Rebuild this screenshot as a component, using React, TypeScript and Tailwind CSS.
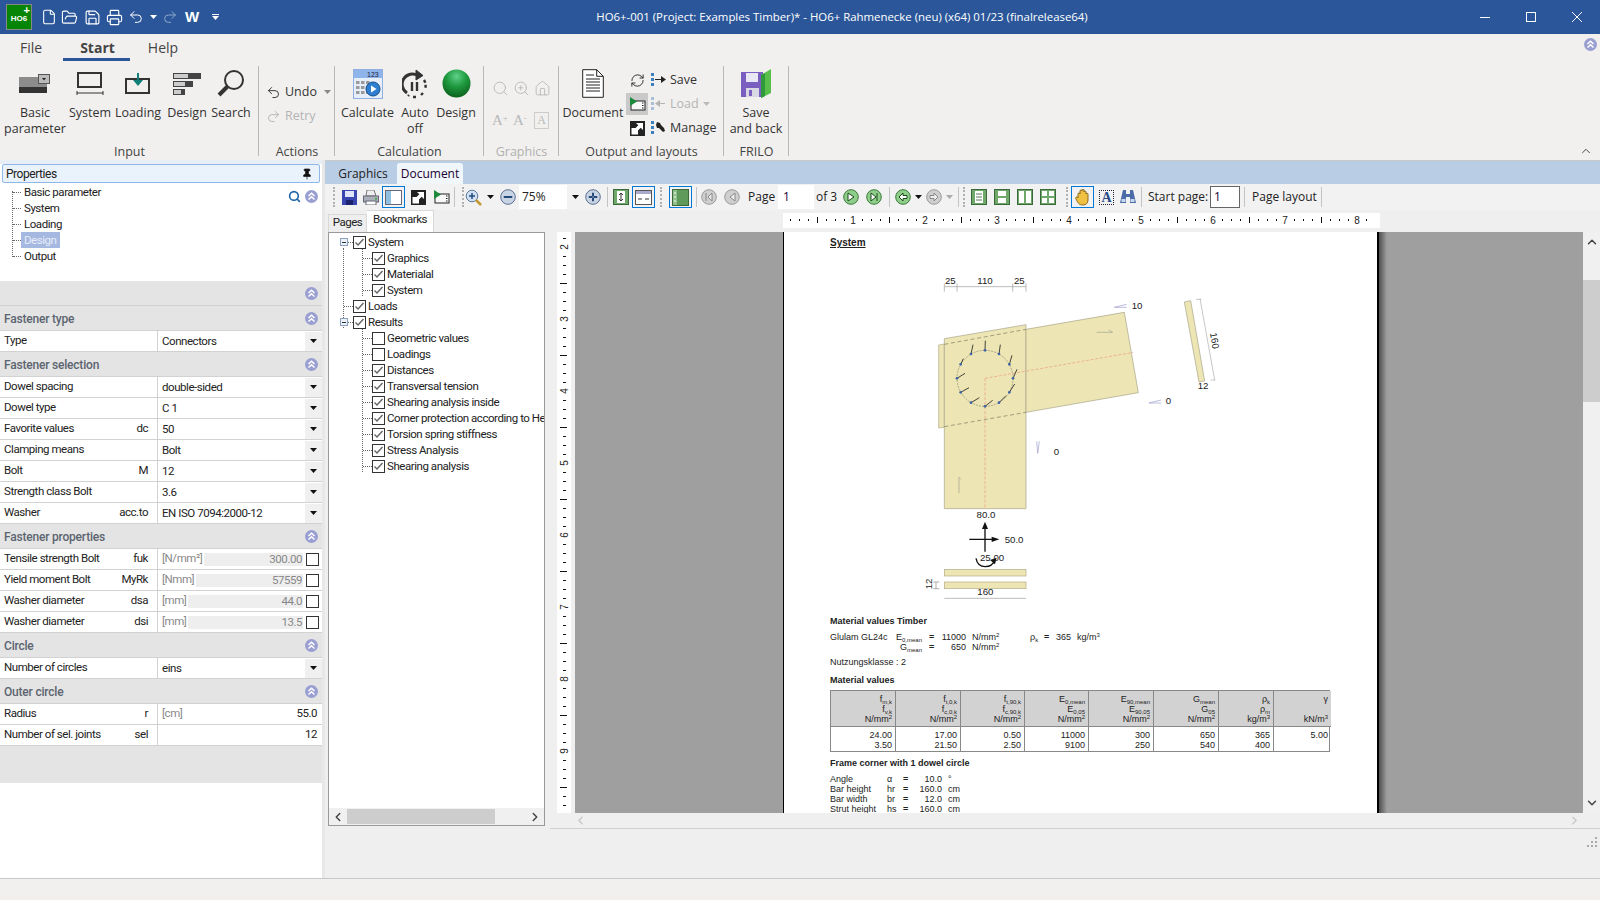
import { File, FolderOpen, Save, Printer, Undo2, Redo2, RefreshCw, Search, ZoomIn, Home, Pin, ChevronLeft, ChevronRight, ChevronUp, ChevronDown } from 'lucide-react'
import type { ReactNode } from 'react'

const Collapse = () => (
  <svg width="13" height="13" viewBox="0 0 13 13">
    <circle cx="6.5" cy="6.5" r="6.5" fill="#9a9fd2" />
    <path d="M3.5 6 6.5 3.2 9.5 6M3.5 9.5 6.5 6.7 9.5 9.5" fill="none" stroke="#fff" strokeWidth="1.5" />
  </svg>
)

const Caret = ({ color = '#111' }: { color?: string }) => (
  <svg width="7" height="4" viewBox="0 0 7 4"><path d="M0 0h7L3.5 4z" fill={color} /></svg>
)

const BasicIcon = () => (
  <svg width="32" height="20" viewBox="0 0 32 20">
    <rect x="0" y="3" width="28" height="10" fill="#8c8c8c" />
    <rect x="0" y="13" width="28" height="6" fill="#333" />
    <rect x="19.5" y="0.5" width="11" height="9" fill="#bbb" stroke="#555" />
    <path d="M23 4h4l-2 2.5z" fill="#222" />
  </svg>
)
const SystemIcon = () => (
  <svg width="28" height="24" viewBox="0 0 28 24" fill="none" stroke="#333">
    <rect x="2" y="1" width="23" height="14" strokeWidth="2" />
    <path d="M1 21h26M1 19v4M27 19v4" />
  </svg>
)
const LoadingIcon = () => (
  <svg width="26" height="22" viewBox="0 0 26 22">
    <rect x="1" y="6" width="23" height="14" fill="none" stroke="#333" strokeWidth="2" />
    <path d="M12 0h2v7h4l-5 6-5-6h4z" fill="#0f8078" />
  </svg>
)
const DesignIcon = () => (
  <svg width="30" height="24" viewBox="0 0 30 24">
    <rect x="1" y="1" width="28" height="6" fill="#444" /><rect x="2" y="2" width="14" height="4" fill="#ccc" />
    <rect x="1" y="9" width="20" height="6" fill="#444" /><rect x="2" y="10" width="11" height="4" fill="#ccc" />
    <rect x="1" y="17" width="12" height="6" fill="#444" /><rect x="2" y="18" width="7" height="4" fill="#ccc" />
  </svg>
)
const SearchBig = () => (
  <svg width="28" height="27" viewBox="0 0 28 27" fill="none" stroke="#333">
    <circle cx="17" cy="10" r="9" strokeWidth="2" />
    <path d="M10.5 16.5 2 25" strokeWidth="4" />
  </svg>
)
const CalcIcon = () => (
  <svg width="30" height="30" viewBox="0 0 30 30">
    <rect x="0.5" y="0.5" width="29" height="29" fill="#e6eefa" stroke="#8fb0e0" />
    <rect x="1" y="1" width="28" height="8" fill="#8fb4ea" />
    <text x="14" y="8" fontSize="7" fontFamily="Liberation Sans" fill="#224">123</text>
    {[12, 17, 22].map(y => [3, 8, 13].map(x => <rect key={`${x}-${y}`} x={x} y={y} width="3.5" height="3" fill="#9a9a9a" />))}
    <circle cx="20" cy="20" r="7" fill="#2f7fd0" stroke="#154d8a" />
    <path d="M18 16.5v7l5.5-3.5z" fill="#fff" />
  </svg>
)
const AutoOff = () => (
  <svg width="26" height="30" viewBox="0 0 26 30" fill="none" stroke="#333">
    <path d="M5 24A10 10 0 0 1 16 6.5" strokeWidth="3" />
    <path d="M14 1l7 5.5-7 4.5z" fill="#333" />
    <path d="M10 13v9M15 13v9" strokeWidth="2.4" />
    <path d="M22 11a10 10 0 0 1 1 9M21 24l-2 2M14 28h-3M7 26l-1 1" strokeWidth="2.4" strokeDasharray="3 2" />
  </svg>
)
const GreenBall = () => (
  <svg width="29" height="29" viewBox="0 0 29 29">
    <defs>
      <radialGradient id="ball" cx="50%" cy="25%" r="80%">
        <stop offset="0%" stopColor="#5fd08a" /><stop offset="45%" stopColor="#1f9a3f" /><stop offset="100%" stopColor="#0b5a1a" />
      </radialGradient>
    </defs>
    <circle cx="14.5" cy="14.5" r="14" fill="url(#ball)" />
  </svg>
)
const DocIcon = () => (
  <svg width="22" height="29" viewBox="0 0 22 29" fill="#fff" stroke="#222">
    <path d="M.7.7h14l6.6 6.6v21H.7z" /><path d="M14.7.7v6.6h6.6" fill="none" />
    <path d="M4 6h8M4 10h14M4 13h14M4 16h14M4 19h14M4 22h14" fill="none" />
  </svg>
)
const FilmPlay = ({ w = 17 }: { w?: number }) => (
  <svg width={w} height="14" viewBox="0 0 17 14">
    <rect x="2" y="4" width="14" height="9" fill="#f8f8f8" stroke="#222" />
    <path d="M1 0v9l7-4.5z" fill="#1c8a3a" />
    <path d="M13 6h1.5M13 8.5h1.5M13 11h1.5" stroke="#222" />
  </svg>
)
const PopOut = () => (
  <svg width="15" height="15" viewBox="0 0 15 15">
    <rect width="15" height="15" fill="#222" />
    <rect x="1.5" y="7" width="6.5" height="6.5" fill="#fff" />
    <path d="M6 2h7v7l-2.3-2.3-3 3-2.4-2.4 3-3z" fill="#fff" />
  </svg>
)
const ListArrow = ({ kind, color = '#222' }: { kind: 'save' | 'load' | 'manage'; color?: string }) => (
  <svg width="15" height="14" viewBox="0 0 15 14">
    <path d="M0 0h3v3H0zM0 5h3v3H0zM0 10h3v3H0z" fill={color === '#222' ? '#3a80c0' : '#a8c0d8'} />
    {kind === 'save' && <path d="M4 6h6V3l5 3.5L10 10V7H4z" fill={color} />}
    {kind === 'load' && <path d="M14 6H9V3L4 6.5 9 10V7h5z" fill={color} />}
    {kind === 'manage' && <path d="M6 1l3 1 1 2 3 3 1 3-2 1-4-4-2 0-1-3z" fill={color} />}
  </svg>
)
const FriloSave = () => (
  <svg width="30" height="30" viewBox="0 0 30 30">
    <path d="M0 3h22v25H0z" fill="#7a5fc0" />
    <rect x="5" y="4" width="12" height="9" fill="#e8e8f4" />
    <rect x="5" y="19" width="13" height="9" fill="#d8d8e4" /><rect x="8" y="21" width="3" height="6" fill="#7a5fc0" />
    <path d="M20 6 30 0v24l-10 5z" fill="#58c04a" />
    <path d="M20 6 24 4v23l-4 2z" fill="#2f9a3a" />
  </svg>
)

const RibbonBtn = ({ w, icon, label }: { w: string; icon: ReactNode; label: ReactNode }) => (
  <div className={`flex shrink-0 flex-col items-center ${w}`}>
    <div className="flex h-[43px] items-center justify-center">{icon}</div>
    <div className="text-center leading-[16px]">{label}</div>
  </div>
)

const Group = ({ w, label, dim, children }: { w: string; label: string; dim?: boolean; children: ReactNode }) => (
  <div className={`relative flex h-full shrink-0 flex-col ${w}`}>
    <div className="flex h-[84px] pt-[1px]">{children}</div>
    <div className={`text-center leading-[16px] ${dim ? 'text-[#b0b0b0]' : 'text-[#444]'}`}>{label}</div>
    <div className="absolute right-0 top-[5px] h-[90px] w-px bg-[#b8b8b8]" />
  </div>
)

const Ribbon = () => (
  <div className="flex h-[99px] shrink-0 bg-[#f1f0ef] text-[12.5px] text-[#333]">
    <Group w="w-[259px]" label="Input">
      <RibbonBtn w="w-[70px]" icon={<BasicIcon />} label={<>Basic<br />parameter</>} />
      <RibbonBtn w="w-[40px]" icon={<SystemIcon />} label="System" />
      <RibbonBtn w="w-[56px]" icon={<LoadingIcon />} label="Loading" />
      <RibbonBtn w="w-[42px]" icon={<DesignIcon />} label="Design" />
      <RibbonBtn w="w-[46px]" icon={<SearchBig />} label="Search" />
    </Group>
    <Group w="w-[76px]" label="Actions">
      <div className="flex flex-col gap-[8px] pl-[7px] pt-[22px]">
        <div className="flex h-[16px] items-center gap-[4px]"><Undo2 size={15} strokeWidth={1.5} /><span>Undo</span><span className="ml-[3px]"><Caret color="#888" /></span></div>
        <div className="flex h-[16px] items-center gap-[4px] text-[#b4b4b4]"><Redo2 size={15} strokeWidth={1.5} /><span>Retry</span></div>
      </div>
    </Group>
    <Group w="w-[149px]" label="Calculation">
      <RibbonBtn w="w-[65px]" icon={<CalcIcon />} label="Calculate" />
      <RibbonBtn w="w-[30px]" icon={<AutoOff />} label={<>Auto<br />off</>} />
      <RibbonBtn w="w-[52px]" icon={<GreenBall />} label="Design" />
    </Group>
    <Group w="w-[75px]" label="Graphics" dim>
      <div className="grid h-fit grid-cols-3 gap-y-[15px] pl-[6px] pt-[18px] text-[#b8b8b8]">
        <Search size={17} strokeWidth={1.3} className="mx-[2px]" />
        <ZoomIn size={17} strokeWidth={1.3} className="mx-[2px]" />
        <Home size={17} strokeWidth={1.3} className="mx-[2px]" />
        <span className="mx-[2px] [font-family:'Liberation_Serif',serif] text-[15px] leading-[17px]">A<sup className="text-[9px]">+</sup></span>
        <span className="mx-[2px] [font-family:'Liberation_Serif',serif] text-[15px] leading-[17px]">A<sup className="text-[9px]">-</sup></span>
        <span className="mx-[2px] w-[15px] border border-[#ccc] text-center [font-family:'Liberation_Serif',serif] text-[12px] leading-[15px]">A</span>
      </div>
    </Group>
    <Group w="w-[165px]" label="Output and layouts">
      <div className="ml-[1px]"><RibbonBtn w="w-[66px]" icon={<DocIcon />} label="Document" /></div>
      <div className="flex flex-col pt-[6px]">
        <div className="flex h-[24px] items-center"><span className="flex w-[22px] justify-center"><RefreshCw size={15} strokeWidth={1.6} /></span><span className="ml-[3px] mr-[4px]"><ListArrow kind="save" /></span>Save</div>
        <div className="flex h-[24px] items-center text-[#b4b4b4]"><span className="flex h-[22px] w-[22px] items-center justify-center bg-[#c9c9c9]"><FilmPlay /></span><span className="ml-[3px] mr-[4px]"><ListArrow kind="load" color="#b4b4b4" /></span>Load<span className="ml-[4px]"><Caret color="#bbb" /></span></div>
        <div className="flex h-[24px] items-center"><span className="flex w-[22px] justify-center"><PopOut /></span><span className="ml-[3px] mr-[4px]"><ListArrow kind="manage" /></span>Manage</div>
      </div>
    </Group>
    <Group w="w-[65px]" label="FRILO">
      <RibbonBtn w="w-[64px]" icon={<FriloSave />} label={<>Save<br />and back</>} />
    </Group>
    <div className="flex flex-1 items-end justify-end pb-[2px] pr-[7px]"><ChevronUp size={14} strokeWidth={1.5} /></div>
  </div>
)

const Head = ({ label }: { label: string }) => (
  <div className="flex h-[25px] items-center justify-between border-b border-[#d2d2d2] bg-[#e4e4e4] pl-[4px] pr-[4px] pt-[1px] text-[12px] font-medium tracking-[-0.2px] text-[#5c6470]">
    <span>{label}</span><Collapse />
  </div>
)

const Label = ({ label, sym }: { label: string; sym?: string }) => (
  <div className="flex w-[158px] shrink-0 items-center justify-between border-r border-[#d2d2d2] pl-[4px] pr-[9px]">
    <span>{label}</span><span>{sym}</span>
  </div>
)

const Row = ({ label, sym, value }: { label: string; sym?: string; value: string }) => (
  <div className="flex h-[21px] border-b border-[#d2d2d2] bg-white">
    <Label label={label} sym={sym} />
    <div className="flex flex-1 items-center justify-between pl-[4px]">
      <span className="pt-[2px]">{value}</span>
      <span className="flex h-[19px] w-[17px] items-center justify-center bg-[#f0f0f0]"><Caret /></span>
    </div>
  </div>
)

const RoRow = ({ label, sym, unit, value, field }: { label: string; sym: string; unit: string; value: string; field: string }) => (
  <div className="flex h-[21px] border-b border-[#d2d2d2] bg-white">
    <Label label={label} sym={sym} />
    <div className="flex min-w-0 flex-1 items-center pl-[4px] pr-[3px] text-[#888]">
      <span className="min-w-0 flex-1 whitespace-nowrap">{unit}</span>
      <span className={`h-[13px] shrink-0 bg-[#eeeeee] pr-[1px] text-right leading-[13px] ${field}`}>{value}</span>
      <span className="ml-[3px] h-[13px] w-[13px] shrink-0 border border-[#333] bg-white" />
    </div>
  </div>
)

const NumRow = ({ label, sym, unit, value }: { label: string; sym: string; unit?: string; value: string }) => (
  <div className="flex h-[21px] border-b border-[#d2d2d2] bg-white">
    <Label label={label} sym={sym} />
    <div className="flex flex-1 items-center justify-between pl-[4px] pr-[5px]">
      <span className="text-[#888]">{unit}</span><span>{value}</span>
    </div>
  </div>
)

const LeftPanel = () => (
  <div className="flex w-[322px] shrink-0 flex-col bg-white text-[11.5px] tracking-[-0.45px] text-[#222] [font-family:Roboto,sans-serif]">
    <div className="h-[4px] bg-[#e8eef6]" />
    <div className="mx-[2px] flex h-[19px] items-center justify-between rounded-[2px] border border-[#8fb8e8] bg-[#eaf3fc] pl-[3px] pr-[6px] text-[12px]">
      <span>Properties</span><Pin size={12} fill="#111" strokeWidth={1.5} />
    </div>
    <div className="relative h-[98px] pt-[1px]">
      <div className="absolute left-[12px] top-[8px] h-[66px] border-l border-dotted border-[#666]" />
      {['Basic parameter', 'System', 'Loading', 'Design', 'Output'].map((t, i) => (
        <div key={t} className="relative flex h-[16px] items-center pl-[21px] leading-[16px]">
          <div className="absolute left-[13px] top-[8px] w-[8px] border-t border-dotted border-[#666]" />
          <span className={`px-[3px] leading-[16px] ${i === 3 ? 'bg-[#a5b8e0] text-[#e8ecf8]' : ''}`}>{t}</span>
        </div>
      ))}
      <div className="absolute right-[4px] top-[7px] flex items-center gap-[4px]">
        <Search size={13} strokeWidth={3} color="#1e64a8" /><Collapse />
      </div>
    </div>
    <div className="flex h-[25px] items-center justify-end border-b border-[#d2d2d2] bg-[#e4e4e4] pr-[4px]"><Collapse /></div>
    <Head label="Fastener type" />
    <Row label="Type" value="Connectors" />
    <Head label="Fastener selection" />
    <Row label="Dowel spacing" value="double-sided" />
    <Row label="Dowel type" value="C 1" />
    <Row label="Favorite values" sym="dc" value="50" />
    <Row label="Clamping means" value="Bolt" />
    <Row label="Bolt" sym="M" value="12" />
    <Row label="Strength class Bolt" value="3.6" />
    <Row label="Washer" sym="acc.to" value="EN ISO 7094:2000-12" />
    <Head label="Fastener properties" />
    <RoRow label="Tensile strength Bolt" sym="fuk" unit="[N/mm²]" value="300.00" field="w-[99px]" />
    <RoRow label="Yield moment Bolt" sym="MyRk" unit="[Nmm]" value="57559" field="w-[107px]" />
    <RoRow label="Washer diameter" sym="dsa" unit="[mm]" value="44.0" field="w-[115px]" />
    <RoRow label="Washer diameter" sym="dsi" unit="[mm]" value="13.5" field="w-[115px]" />
    <Head label="Circle" />
    <Row label="Number of circles" value="eins" />
    <Head label="Outer circle" />
    <NumRow label="Radius" sym="r" unit="[cm]" value="55.0" />
    <NumRow label="Number of sel. joints" sym="sel" value="12" />
    <div className="h-[37px] bg-[#e4e4e4]" />
  </div>
)

const TreeCheck = ({ on = true }: { on?: boolean }) => (
  <svg width="13" height="13" viewBox="0 0 13 13" className="shrink-0">
    <rect x="0.5" y="0.5" width="12" height="12" fill="#fff" stroke="#333" />
    {on && <path d="M2.5 6.5 5 9l5.5-6" fill="none" stroke="#666" strokeWidth="1.4" />}
  </svg>
)

const bookmarks: [string, number, boolean, boolean?][] = [
  ['System', 0, true, true],
  ['Graphics', 1, true],
  ['Materialal', 1, true],
  ['System', 1, true],
  ['Loads', 0, true],
  ['Results', 0, true, true],
  ['Geometric values', 1, false],
  ['Loadings', 1, false],
  ['Distances', 1, true],
  ['Transversal tension', 1, true],
  ['Shearing analysis inside', 1, true],
  ['Corner protection according to He', 1, true],
  ['Torsion spring stiffness', 1, true],
  ['Stress Analysis', 1, true],
  ['Shearing analysis', 1, true],
]

const BookmarkPanel = () => (
  <div className="flex w-[225px] shrink-0 flex-col text-[11.5px] tracking-[-0.45px] text-[#222] [font-family:Roboto,sans-serif]">
    <div className="flex h-[22px] items-end pl-[3px]">
      <span className="flex h-[18px] w-[39px] items-center justify-center border-l border-r border-t border-[#d8d8d8] bg-[#eeeeee] pb-[1px]">Pages</span>
      <span className="flex h-[22px] w-[67px] items-center justify-center border-r border-t border-[#d8d8d8] bg-white pb-[3px]">Bookmarks</span>
    </div>
    <div className="ml-[3px] flex h-[594px] w-[217px] flex-col border border-[#9a9a9a] bg-white">
      <div className="relative flex-1 overflow-hidden pt-[1px]">
        <div className="absolute left-[14px] top-[15px] h-[80px] border-l border-dotted border-[#666]" />
        <div className="absolute left-[33px] top-[15px] h-[48px] border-l border-dotted border-[#666]" />
        <div className="absolute left-[33px] top-[95px] h-[144px] border-l border-dotted border-[#666]" />
        {bookmarks.map(([t, depth, on, exp], i) => (
          <div key={i} className="relative flex h-[16px] items-center whitespace-nowrap" style={{ paddingLeft: depth ? 43 : 24 }}>
            <div className="absolute top-[8px] w-[9px] border-t border-dotted border-[#666]" style={{ left: depth ? 34 : 15 }} />
            {exp && (
              <span className="absolute left-[11px] top-[4px] flex h-[8px] w-[8px] items-center justify-center border border-[#8aa0c0] bg-[#eef2f8]">
                <span className="h-px w-[4px] bg-[#234]" />
              </span>
            )}
            <span className="relative"><TreeCheck on={on} /></span>
            <span className="pl-[2px] leading-[16px]">{t}</span>
          </div>
        ))}
      </div>
      <div className="flex h-[17px] items-center bg-[#f0f0f0] text-[#444]">
        <ChevronLeft size={14} strokeWidth={2.5} className="ml-[2px]" />
        <div className="ml-[2px] h-[15px] w-[148px] bg-[#cdcdcd]" />
        <div className="flex-1" />
        <ChevronRight size={14} strokeWidth={2.5} className="mr-[2px]" />
      </div>
    </div>
  </div>
)

const Grip = () => <div className="mx-[3px] h-[20px] w-[2px] border-l-2 border-dotted border-[#b0b0b0]" />
const Sep = () => <div className="mx-[4px] h-[20px] w-px bg-[#c4c4c4]" />
const Sel = ({ children }: { children: ReactNode }) => (
  <span className="flex h-[22px] w-[23px] items-center justify-center border border-[#0078d7]">{children}</span>
)
const Tb = ({ w, children }: { w: string; children: ReactNode }) => (
  <span className={`flex h-[22px] shrink-0 items-center justify-center ${w}`}>{children}</span>
)

const Round = ({ dim, glyph, minus }: { dim?: boolean; glyph: string; minus?: boolean }) => (
  <svg width="16" height="16" viewBox="0 0 16 16">
    <circle cx="8" cy="8" r="7.3" fill={minus ? '#c8d4e4' : dim ? '#cfcfcf' : '#8fce8a'} stroke={minus ? '#5a7090' : dim ? '#9a9a9a' : '#3a7a3a'} />
    <path d={glyph} fill={dim ? '#eee' : '#fff'} stroke={minus ? '#244a7a' : dim ? '#888' : '#1a4a1a'} />
  </svg>
)

const View = ({ mode }: { mode: 0 | 1 | 2 | 3 }) => (
  <svg width="16" height="16" viewBox="0 0 16 16">
    <rect x="0.5" y="0.5" width="15" height="15" fill="#6fa86a" stroke="#3a6a3a" />
    {mode === 0 && <><rect x="4" y="2" width="8" height="12" fill="#fff" /><path d="M5 5h6M5 8h6M5 11h6" stroke="#5a7a5a" /></>}
    {mode === 1 && <><rect x="4" y="2" width="8" height="5" fill="#fff" /><rect x="4" y="9" width="8" height="5" fill="#fff" /></>}
    {mode === 2 && <><rect x="2" y="2" width="5" height="12" fill="#fff" /><rect x="9" y="2" width="5" height="12" fill="#fff" /></>}
    {mode === 3 && <><rect x="2" y="2" width="5" height="5" fill="#fff" /><rect x="9" y="2" width="5" height="5" fill="#fff" /><rect x="2" y="9" width="5" height="5" fill="#fff" /><rect x="9" y="9" width="5" height="5" fill="#fff" /></>}
  </svg>
)

const DocToolbar = () => (
  <div className="flex h-[26px] shrink-0 items-center bg-[#f2f2f2] pl-[5px] text-[12px] text-[#222]">
    <Grip />
    <Tb w="w-[22px]">
      <svg width="15" height="15" viewBox="0 0 15 15"><rect width="15" height="15" fill="#3a46b0" /><rect x="3" y="1" width="9" height="6" fill="#dfe4fa" /><rect x="4" y="10" width="7" height="5" fill="#1c2470" /></svg>
    </Tb>
    <Tb w="w-[22px]">
      <svg width="16" height="15" viewBox="0 0 16 15"><path d="M4 0h7l2 6H3z" fill="#eee" stroke="#777" /><rect x="0.5" y="6" width="15" height="6" fill="#aab0b8" stroke="#667" /><rect x="3" y="11" width="10" height="4" fill="#fff" stroke="#667" /><rect x="12" y="8" width="2" height="1.5" fill="#3a3" /></svg>
    </Tb>
    <Sel><svg width="17" height="15" viewBox="0 0 17 15"><rect x="0.5" y="0.5" width="16" height="14" fill="#fff" stroke="#667" /><rect x="1" y="1" width="5" height="13" fill="#8fc0e0" /></svg></Sel>
    <Tb w="w-[27px]"><PopOut /></Tb>
    <Tb w="w-[18px]"><FilmPlay /></Tb>
    <Sep />
    <Grip />
    <span className="-ml-[3px]"><Tb w="w-[19px]"><svg width="17" height="17" viewBox="0 0 17 17"><circle cx="7" cy="7" r="5.8" fill="#cfe0f4" stroke="#607898" /><path d="M4 7h6M7 4v6" stroke="#244a7a" strokeWidth="1.5" /><path d="M11 11l5 5" stroke="#c09a30" strokeWidth="2.5" /></svg></Tb></span>
    <Tb w="w-[14px]"><Caret /></Tb>
    <Tb w="w-[22px]"><Round minus glyph="M4 7.5h8v1H4z" /></Tb>
    <span className="flex h-[24px] w-[48px] items-center bg-white pl-[3px]">75%</span>
    <Tb w="w-[16px]"><Caret /></Tb>
    <Tb w="w-[20px]"><Round minus glyph="M4 7.5h3.5V4h1v3.5H12v1H8.5V12h-1V8.5H4z" /></Tb>
    <Sep />
    <Tb w="w-[18px]"><svg width="16" height="16" viewBox="0 0 16 16"><rect x="0.5" y="0.5" width="15" height="15" fill="#6fa86a" stroke="#3a6a3a" /><rect x="4" y="2" width="8" height="12" fill="#fff" /><path d="M8 4v8M6 6l2-2 2 2M6 10l2 2 2-2" fill="none" stroke="#333" /></svg></Tb>
    <span className="ml-[2px]"><Sel><svg width="17" height="15" viewBox="0 0 17 15"><rect x="0.5" y="0.5" width="16" height="14" fill="#fff" stroke="#555" /><rect x="1" y="1" width="15" height="3" fill="#aac" /><path d="M3 9h4M10 9h4" stroke="#333" /></svg></Sel></span>
    <span className="ml-[2px]"><Grip /></span>
    <span className="ml-[4px]"><Sel><svg width="17" height="17" viewBox="0 0 17 17"><rect x="0.5" y="0.5" width="16" height="16" fill="#8fc08a" stroke="#3a6a3a" /><rect x="5" y="1" width="11" height="15" fill="#5f9a5a" /><path d="M2 4h2M2 8h2M2 12h2" stroke="#fff" /></svg></Sel></span>
    <Sep />
    <span className="-ml-[1px]"><Tb w="w-[18px]"><Round dim glyph="M5 4v8M11 4v8L7 8z" /></Tb></span>
    <Tb w="w-[28px]"><Round dim glyph="M11 4v8L6 8z" /></Tb>
    <span className="ml-[2px] w-[30px]">Page</span>
    <span className="flex h-[24px] w-[36px] items-center bg-white pl-[5px] text-[#203]">1</span>
    <span className="ml-[2px] w-[23px]">of 3</span>
    <Tb w="w-[23px]"><Round glyph="M5 4v8l6-4z" /></Tb>
    <Tb w="w-[23px]"><Round glyph="M5 4v8l5-4zM11 4v8" /></Tb>
    <Sep />
    <Tb w="w-[18px]"><Round glyph="M12 6.5H8V4L4 8l4 4V9.5h4z" /></Tb>
    <Tb w="w-[12px]"><Caret /></Tb>
    <Tb w="w-[20px]"><Round dim glyph="M4 6.5h4V4l4 4-4 4V9.5H4z" /></Tb>
    <Tb w="w-[10px]"><Caret color="#aaa" /></Tb>
    <Sep />
    <span className="-ml-[3px]"><Grip /></span>
    <Tb w="w-[22px]"><View mode={0} /></Tb>
    <Tb w="w-[23px]"><View mode={1} /></Tb>
    <Tb w="w-[23px]"><View mode={2} /></Tb>
    <Tb w="w-[23px]"><View mode={3} /></Tb>
    <span className="ml-[4px]"><Grip /></span>
    <Sel><svg width="15" height="17" viewBox="0 0 15 17"><path d="M3 9V5c0-1.5 2-1.5 2 0V2c0-1.5 2-1.5 2 0v-1c0-1 2-1 2 0v2c0-1.5 2-1.5 2 0v2c0-1 2-1 2 0v6c0 3-2 5-5 5-4 0-5-2-7-6-1-2 1-3 2-1z" fill="#f0c040" stroke="#8a6a20" /></svg></Sel>
    <Tb w="w-[25px]"><span className="flex h-[15px] w-[15px] items-center justify-center border border-dotted border-[#223] [font-family:'Liberation_Serif',serif] text-[14px] font-bold text-[#2a4a8a]">A</span></Tb>
    <Tb w="w-[18px]"><svg width="16" height="15" viewBox="0 0 16 15"><path d="M3 0h3v4h4V0h3l3 13h-6V7H6v6H0z" fill="#4a6aa8" /><path d="M1.5 9h4v3h-4zM10.5 9h4v3h-4z" fill="#c8d8f0" /></svg></Tb>
    <Sep />
    <span className="ml-[2px] w-[62px] whitespace-nowrap">Start page:</span>
    <span className="flex h-[22px] w-[30px] items-center border border-[#666] bg-white pl-[3px] text-[#203]">1</span>
    <Sep />
    <span className="ml-[3px] whitespace-nowrap">Page layout</span>
    <Sep />
  </div>
)

const TopRuler = () => (
  <svg width="597" height="15" viewBox="0 0 597 15" className="bg-white">
    {Array.from({ length: 66 }, (_, i) => {
      if (i % 8 === 0) return null
      const x = i * 9 - 2
      return <rect key={i} x={x} y={i % 4 === 0 ? 4 : 6} width="1" height={i % 4 === 0 ? 6 : 2} fill="#111" />
    })}
    {[1, 2, 3, 4, 5, 6, 7, 8].map(n => (
      <text key={n} x={n * 72 - 2} y="11" fontSize="10" fontFamily="Liberation Sans" textAnchor="middle" fill="#222">{n}</text>
    ))}
  </svg>
)

const SideRuler = () => (
  <svg width="14" height="581" viewBox="0 0 14 581" className="bg-white">
    {Array.from({ length: 66 }, (_, i) => {
      const y = i * 9 - 3
      if (i % 8 === 2) return null
      return <rect key={i} x={i % 4 === 2 ? 3 : 6} y={y} width={i % 4 === 2 ? 7 : 3} height="1" fill="#111" />
    })}
    {[2, 3, 4, 5, 6, 7, 8, 9].map((n, i) => (
      <text key={n} transform={`translate(11 ${15 + i * 72}) rotate(-90)`} fontSize="10" fontFamily="Liberation Sans" textAnchor="middle" fill="#222">{n}</text>
    ))}
  </svg>
)

const dowels: [number, number, number, number][] = [
  [315, 361, 316, 332], [357, 372, 361, 344], [388, 403, 396, 376], [399, 445, 411, 418],
  [388, 487, 404, 462], [357, 518, 378, 497], [315, 529, 338, 511], [273, 518, 298, 503],
  [242, 487, 267, 473], [231, 445, 255, 430], [242, 403, 250, 386], [273, 372, 279, 344],
]

const Frame = () => (
  <svg width="360" height="330" viewBox="0 120 1080 990" fontFamily="Liberation Sans" fontSize="29" fill="#222">
    <path d="M176 345 193 342V592L176 594z" fill="#ede5b3" stroke="#b0ac88" strokeWidth="2" />
    <path d="M193 326 438 284V836H193z" fill="#ede5b3" stroke="#a5a288" strokeWidth="2" />
    <path d="M438 298 733 247 775 488 438 547z" fill="#ede5b3" stroke="#a5a288" strokeWidth="2" />
    <path d="M193 343 438 298M193 590 438 547" stroke="#77765f" strokeWidth="2" strokeDasharray="12 8" fill="none" />
    <path d="M315 445V836M315 445 760 367" stroke="#ee9a80" strokeWidth="2" strokeDasharray="9 5" fill="none" />
    <circle cx="315" cy="445" r="84" fill="none" stroke="#8a8a70" strokeWidth="2" strokeDasharray="6 3" />
    {dowels.map(([x, y, x2, y2]) => (
      <g key={`${x}-${y}`}>
        <path d={`M${x} ${y}L${x2} ${y2}`} stroke="#222" strokeWidth="2.5" />
        <circle cx={x} cy={y} r="4" fill="#3c64a8" />
      </g>
    ))}
    <path d="M193 170H438M193 160V185M231 160V185M398 160V185M438 160V185" stroke="#999" strokeWidth="2" fill="none" />
    <text x="211" y="162" textAnchor="middle">25</text><text x="315" y="162" textAnchor="middle">110</text><text x="418" y="162" textAnchor="middle">25</text>
    <path d="M740 223 703 232H740" stroke="#9a9ac8" strokeWidth="2" fill="none" />
    <text x="755" y="236">10</text>
    <path d="M843 510 807 519H843" stroke="#9a9ac8" strokeWidth="2" fill="none" />
    <text x="857" y="523">0</text>
    <path d="M470 634 473 670 478 634" stroke="#9a9ac8" strokeWidth="2" fill="none" />
    <text x="521" y="675">0</text>
    <path d="M650 307H698L686 300" stroke="#888" strokeWidth="1.5" fill="none" />
    <path d="M237 790V742L243 748" stroke="#888" strokeWidth="1.5" fill="none" />
    <path d="M913 216 932 212 974 453 957 456z" fill="#ede5b3" stroke="#a5a288" strokeWidth="2" />
    <path d="M960 206 1004 450M948 208H964M992 450H1006" stroke="#aaa" strokeWidth="2" fill="none" />
    <text transform="translate(990 310) rotate(80)">160</text>
    <text x="953" y="477">12</text>
    <text x="318" y="864" textAnchor="middle">80.0</text>
    <path d="M315 965V890M268 928H340" stroke="#111" strokeWidth="4" />
    <path d="M315 875 306 897H324zM358 928 335 920V936z" fill="#111" />
    <text x="374" y="938">50.0</text>
    <path d="M288 985C295 1020 335 1015 345 990" stroke="#111" strokeWidth="4" fill="none" />
    <path d="M350 983 330 990 345 1003z" fill="#111" />
    <text x="300" y="994">25.00</text>
    <rect x="193" y="1018" width="245" height="20" fill="#ede5b3" stroke="#b0ac88" strokeWidth="2" />
    <rect x="193" y="1056" width="245" height="20" fill="#ede5b3" stroke="#b0ac88" strokeWidth="2" />
    <path d="M160 1056H178M160 1076H178M168 1056V1076" stroke="#888" strokeWidth="2" fill="none" />
    <text transform="translate(155 1078) rotate(-90)">12</text>
    <text x="316" y="1096" textAnchor="middle">160</text>
    <path d="M193 1105H438" stroke="#999" strokeWidth="2" />
  </svg>
)

const S = ({ children }: { children: ReactNode }) => <sub className="text-[6px]">{children}</sub>
const Sup = ({ children }: { children: ReactNode }) => <sup className="text-[6px]">{children}</sup>
const Nmm = () => <>N/mm<Sup>2</Sup></>

const tableCols: [ReactNode, ReactNode, ReactNode, string, string][] = [
  [<>f<S>m,k</S></>, <>f<S>v,k</S></>, <Nmm />, '24.00', '3.50'],
  [<>f<S>t,0,k</S></>, <>f<S>c,0,k</S></>, <Nmm />, '17.00', '21.50'],
  [<>f<S>t,90,k</S></>, <>f<S>c,90,k</S></>, <Nmm />, '0.50', '2.50'],
  [<>E<S>0,mean</S></>, <>E<S>0,05</S></>, <Nmm />, '11000', '9100'],
  [<>E<S>90,mean</S></>, <>E<S>90,05</S></>, <Nmm />, '300', '250'],
  [<>G<S>mean</S></>, <>G<S>05</S></>, <Nmm />, '650', '540'],
  [<>ρ<S>k</S></>, <>ρ<S>m</S></>, <>kg/m<Sup>3</Sup></>, '365', '400'],
  ['γ', '', <>kN/m<Sup>3</Sup></>, '5.00', ''],
]
const tableWidths = ['w-[65px]', 'w-[65px]', 'w-[64px]', 'w-[64px]', 'w-[65px]', 'w-[65px]', 'w-[55px]', 'w-[57px]']

const geo = [
  ['Angle', 'α', '10.0', '°'],
  ['Bar height', 'hr', '160.0', 'cm'],
  ['Bar width', 'br', '12.0', 'cm'],
  ['Strut height', 'hs', '160.0', 'cm'],
]

const Page = () => (
  <div className="relative ml-[208px] h-full w-[596px] shrink-0 overflow-hidden border-l border-r-2 border-black bg-white pl-[46px] text-[9px] leading-[10px] text-[#222] [font-family:'Liberation_Sans',sans-serif]">
    <div className="h-[38px] pt-[5px] text-[10px] font-bold leading-[11px] underline">System</div>
    <div className="-ml-[46px] pl-[96px]"><Frame /></div>
    <div className="mt-[16px] font-bold">Material values Timber</div>
    <div className="mt-[6px] flex h-[10px]">
      <span className="w-[66px]">Glulam GL24c</span>
      <span className="w-[33px]">E<S>0,mean</S></span>
      <span className="w-[10px] font-bold">=</span>
      <span className="w-[27px] text-right">11000</span>
      <span className="ml-[6px] w-[58px]"><Nmm /></span>
      <span className="w-[14px]">ρ<S>k</S></span>
      <span className="w-[12px] font-bold">=</span>
      <span className="w-[15px]">365</span>
      <span className="ml-[6px]">kg/m<Sup>3</Sup></span>
    </div>
    <div className="flex h-[10px]">
      <span className="w-[70px]" />
      <span className="w-[29px]">G<S>mean</S></span>
      <span className="w-[10px] font-bold">=</span>
      <span className="w-[27px] text-right">650</span>
      <span className="ml-[6px]"><Nmm /></span>
    </div>
    <div className="mt-[5px]">Nutzungsklasse : 2</div>
    <div className="mt-[8px] font-bold">Material values</div>
    <div className="mt-[5px] flex w-[500px] border border-[#888]">
      {tableCols.map(([a, b, c, d, e], i) => (
        <div key={i} className={`shrink-0 border-[#888] text-right ${tableWidths[i]} ${i < 7 ? 'border-r' : ''}`}>
          <div className="h-[36px] overflow-hidden border-b border-[#888] bg-[#d2d2d2] pr-[3px] pt-[3px]">
            <div className="h-[10px]">{a}</div><div className="h-[10px]">{b}</div><div className="h-[11px]">{c}</div>
          </div>
          <div className="h-[24px] pr-[3px] pt-[3px]"><div>{d}</div><div>{e}</div></div>
        </div>
      ))}
    </div>
    <div className="mt-[6px] font-bold">Frame corner with 1 dowel circle</div>
    <div className="mt-[6px]">
      {geo.map(([l, s, v, u]) => (
        <div key={l} className="flex h-[10px]">
          <span className="w-[57px]">{l}</span>
          <span className="w-[16px]">{s}</span>
          <span className="w-[10px] font-bold">=</span>
          <span className="w-[29px] text-right">{v}</span>
          <span className="ml-[6px]">{u}</span>
        </div>
      ))}
    </div>
  </div>
)

export default function App() {
  return (
    <div className="flex h-[900px] w-[1600px] flex-col overflow-hidden bg-[#f1f0ef] [font-family:'Open_Sans',sans-serif]">
      <div className="relative flex h-[34px] shrink-0 items-center bg-[#2b579a] text-white">
        <div className="relative ml-[6px] flex h-[26px] w-[26px] items-center justify-center border border-[#888] bg-[#078507] pt-[3px] [font-family:'Liberation_Sans',sans-serif] text-[8px] font-bold">
          HO6<span className="absolute right-[1px] top-[-3px] text-[11px]">+</span>
        </div>
        <File size={16} strokeWidth={1.6} className="ml-[9px]" />
        <FolderOpen size={17} strokeWidth={1.6} className="ml-[4px]" />
        <Save size={17} strokeWidth={1.6} className="ml-[6px]" />
        <Printer size={17} strokeWidth={1.6} className="ml-[5px]" />
        <Undo2 size={16} strokeWidth={1.5} className="ml-[5px]" />
        <span className="ml-[6px]"><Caret color="#fff" /></span>
        <Redo2 size={16} strokeWidth={1.5} color="#8fa8cc" className="ml-[5px]" />
        <span className="ml-[7px] [font-family:'Liberation_Sans',sans-serif] text-[15px] font-bold">W</span>
        <span className="ml-[13px] flex flex-col items-center gap-[1px]"><span className="h-px w-[7px] bg-white" /><Caret color="#fff" /></span>
        <div className="absolute left-[596px] w-[492px] whitespace-nowrap text-center text-[11.4px]">HO6+-001 (Project: Examples Timber)* - HO6+ Rahmenecke (neu) (x64) 01/23 (finalrelease64)</div>
        <div className="ml-auto flex items-center pr-[18px]">
          <svg width="10" height="10" viewBox="0 0 10 10" className="mr-[36px]"><path d="M0 5.5h10" stroke="#fff" /></svg>
          <svg width="10" height="10" viewBox="0 0 10 10" className="mr-[36px]"><rect x="0.5" y="0.5" width="9" height="9" fill="none" stroke="#fff" /></svg>
          <svg width="10" height="10" viewBox="0 0 10 10"><path d="M0 0 10 10M10 0 0 10" stroke="#fff" /></svg>
        </div>
      </div>
      <div className="relative flex h-[27px] shrink-0 items-center bg-[#f1f0ef] text-[14px] text-[#444]">
        <span className="ml-[20px]">File</span>
        <span className="ml-[38px] font-bold text-[#444]">Start</span>
        <span className="ml-[33px]">Help</span>
        <div className="absolute bottom-0 left-[63px] h-[3px] w-[67px] bg-[#2b579a]" />
        <div className="absolute right-[3px] top-[4px]"><Collapse /></div>
      </div>
      <Ribbon />
      <div className="flex h-[718px] shrink-0 bg-[#f0f0f0]">
        <LeftPanel />
        <div className="w-[3px] shrink-0 bg-[#e8e8e8]" />
        <div className="flex min-w-0 flex-1 flex-col bg-[#efefef]">
          <div className="flex h-[24px] shrink-0 items-end border-t border-[#c8c8c8] bg-[#b9cde5] pl-[5px] text-[12px] text-[#222]">
            <span className="flex h-[21px] w-[66px] items-center justify-center">Graphics</span>
            <span className="ml-[1px] flex h-[21px] w-[66px] items-center justify-center rounded-t-[3px] bg-[#f0f6fa] text-[#203]">Document</span>
          </div>
          <DocToolbar />
          <div className="flex h-[619px] shrink-0">
            <BookmarkPanel />
            <div className="flex min-w-0 flex-1 flex-col">
              <div className="h-[22px] shrink-0 pl-[233px] pt-[3px]"><TopRuler /></div>
              <div className="flex h-[581px] shrink-0">
                <div className="ml-[7px] w-[14px] shrink-0"><SideRuler /></div>
                <div className="ml-[4px] flex min-w-0 flex-1 bg-[#9f9f9f]">
                  <Page />
                  <div className="h-full w-[8px] bg-gradient-to-r from-black/50 to-transparent" />
                </div>
                <div className="flex w-[17px] shrink-0 flex-col items-center bg-[#f0f0f0] py-[3px] text-[#444]">
                  <ChevronUp size={14} strokeWidth={2.5} />
                  <div className="mt-[31px] h-[122px] w-[17px] bg-[#cdcdcd]" />
                  <div className="flex-1" />
                  <ChevronDown size={14} strokeWidth={2.5} />
                </div>
              </div>
              <div className="flex h-[16px] shrink-0 items-center justify-between border-b border-[#d0d0d0] pl-[24px] pr-[19px] text-[#c8c8c8]">
                <ChevronLeft size={13} strokeWidth={2.5} /><ChevronRight size={13} strokeWidth={2.5} />
              </div>
            </div>
          </div>
          <div className="flex h-[21px] shrink-0 items-end justify-end pb-[2px] pr-[2px]">
            <svg width="12" height="12" viewBox="0 0 12 12" fill="#aaa"><rect x="9" y="1" width="2" height="2" /><rect x="5" y="5" width="2" height="2" /><rect x="9" y="5" width="2" height="2" /><rect x="1" y="9" width="2" height="2" /><rect x="5" y="9" width="2" height="2" /><rect x="9" y="9" width="2" height="2" /></svg>
          </div>
          <div className="flex-1" />
        </div>
      </div>
      <div className="flex-1 border-t border-[#c8c8c8] bg-[#f1f0ef]" />
    </div>
  )
}
